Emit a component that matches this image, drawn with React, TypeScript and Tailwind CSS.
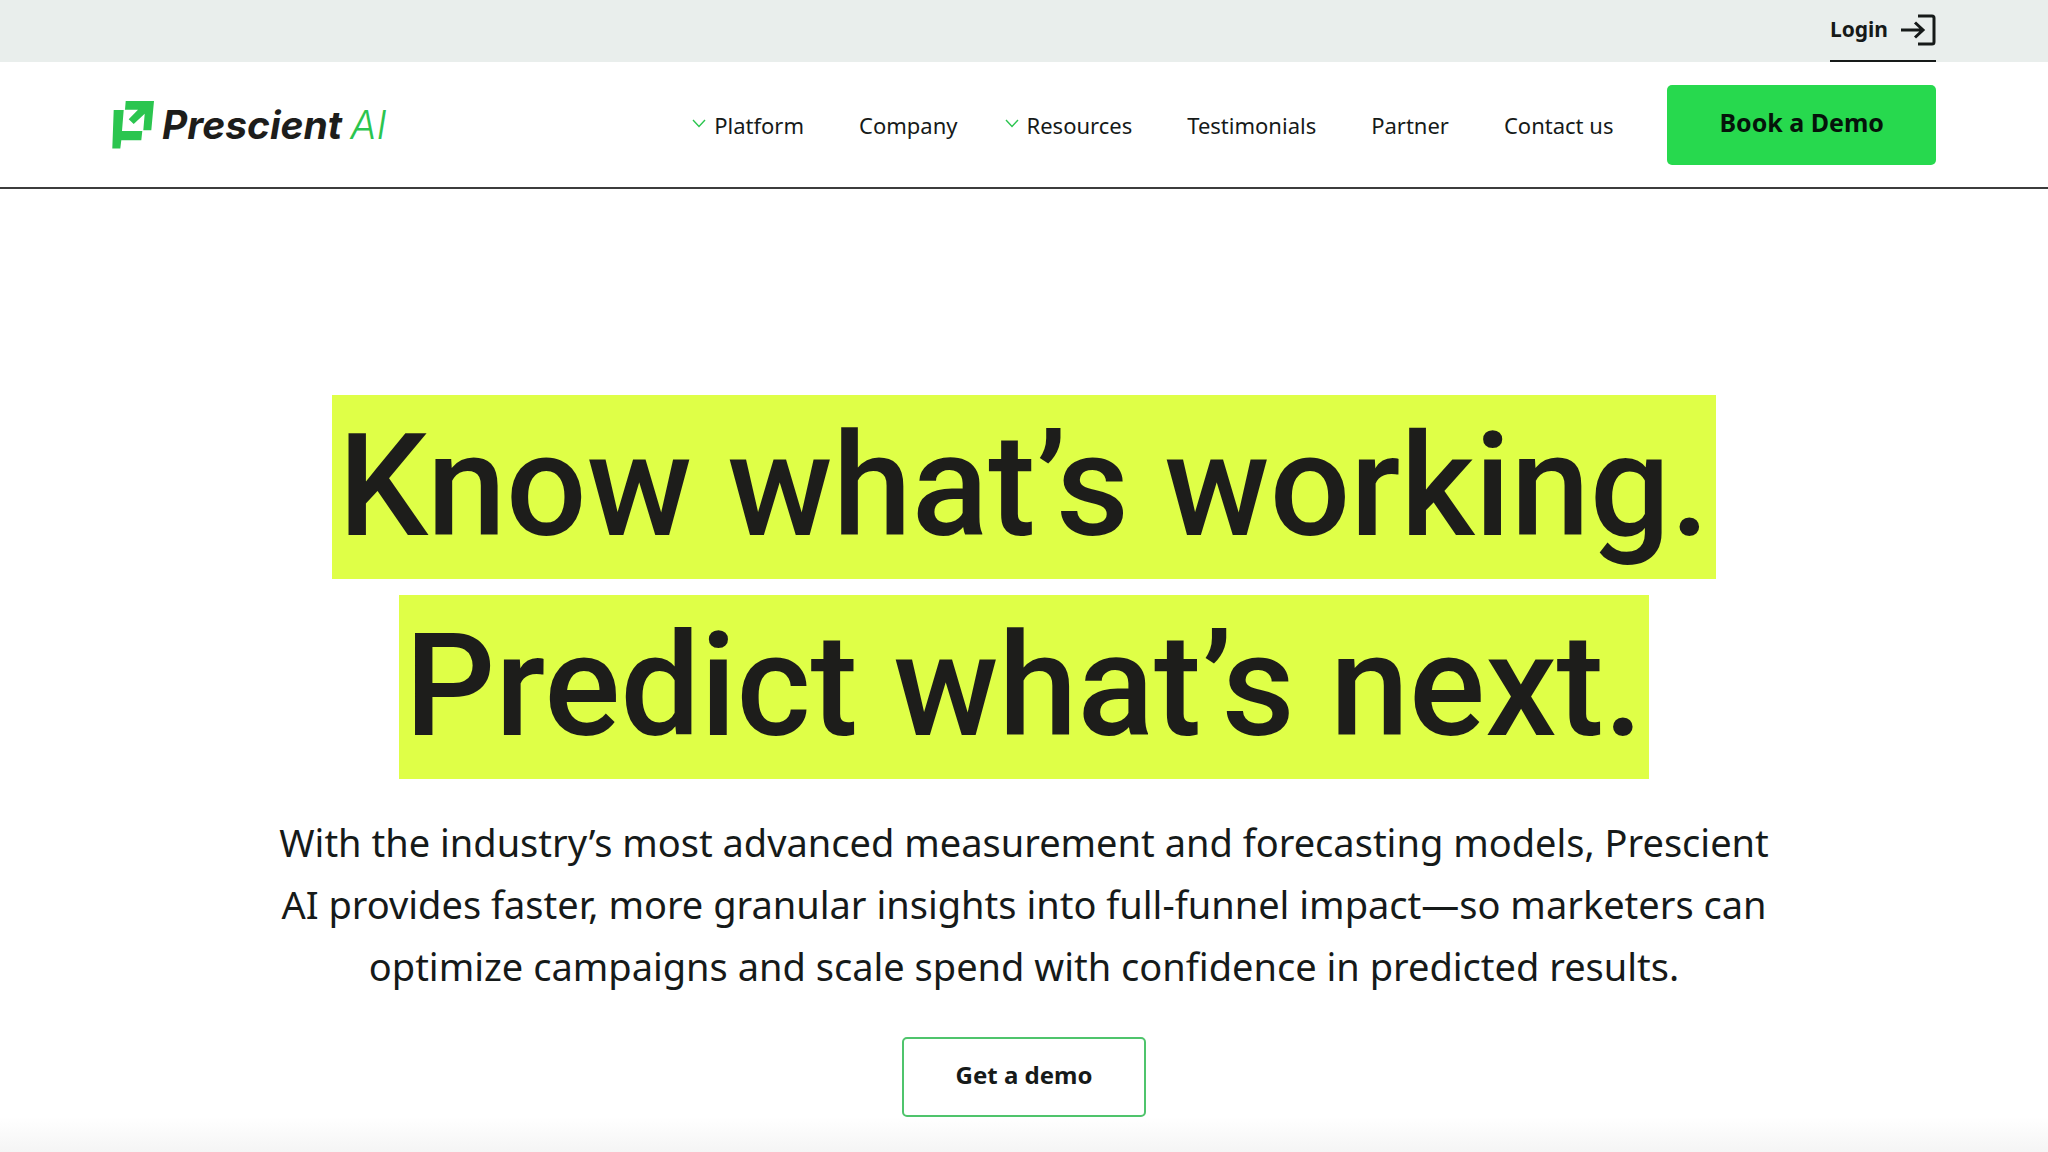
const navItems = [
  { label: 'Platform', dropdown: true },
  { label: 'Company', dropdown: false },
  { label: 'Resources', dropdown: true },
  { label: 'Testimonials', dropdown: false },
  { label: 'Partner', dropdown: false },
  { label: 'Contact us', dropdown: false },
];

function Logo() {
  return (
    <a href="#" aria-label="Prescient AI" className="flex items-center gap-2">
      <svg width="42" height="48" viewBox="0 0 42 48" fill="#2bc54f" aria-hidden="true">
        <path d="M13.7 0H42L39.3 29.3H31.3L32.7 12.7L21.7 23L16.7 18.3L26 8.7H13Z" />
        <path d="M1.7 9H11.7L10 30H30.3L29.3 39.3H9.3L8.3 47.5H0.3Z" />
      </svg>
      <span className="flex items-baseline gap-2 font-['Inter',sans-serif] text-[39px] leading-none italic">
        <span className="font-bold text-[#1d1d1b]">Prescient</span>
        <span className="font-light text-[#2bc54f]">AI</span>
      </span>
    </a>
  );
}

export default function App() {
  return (
    <div className="flex min-h-screen flex-col bg-white font-['Noto_Sans',sans-serif] text-[#161a19]">
      {/* Utility bar */}
      <div className="flex h-[62px] justify-end bg-[#e9eeec] px-28">
        <a href="#" className="flex items-center gap-3 border-b-2 border-[#161a19] text-[21px] font-bold">
          Login
          <svg width="36" height="32" viewBox="0 0 36 32" fill="none" stroke="currentColor" strokeWidth="3" aria-hidden="true">
            <path d="M1 16H23M15 8.500L23 16L15 23.500" />
            <path d="M18 2H32Q34 2 34 4V28Q34 30 32 30H18" />
          </svg>
        </a>
      </div>

      {/* Header */}
      <header className="flex h-[127px] items-center justify-between border-b-2 border-[#3c3c3c] px-28">
        <Logo />
        <div className="flex items-center gap-[54px]">
          <nav className="flex gap-[55px] pt-0.5 text-[22px]">
            {navItems.map((item) => (
              <a key={item.label} href="#" className={item.dropdown ? 'relative pl-3.5' : ''}>
                {item.dropdown && (
                  <svg className="absolute top-2.5 -left-2" width="14" height="9" viewBox="0 0 14 9" fill="none" stroke="#2bc54f" strokeWidth="1.4" aria-hidden="true">
                    <path d="M1 1L7 7.500L13 1" />
                  </svg>
                )}
                {item.label}
              </a>
            ))}
          </nav>
          <button className="h-20 rounded-[5px] bg-[#27d94e] px-[52px] pb-1 text-[25px] font-bold text-[#05140a]">
            Book a Demo
          </button>
        </div>
      </header>

      {/* Hero */}
      <main className="flex flex-col items-center pt-[206px] text-center">
        <h1 className="flex flex-col items-center gap-4 font-['Roboto',sans-serif] text-[142px] leading-[184px] font-medium text-[#1d1d1b]">
          <span className="bg-[#dfff47] px-[6px]">Know what’s working.</span>
          <span className="bg-[#dfff47] px-[6px]">Predict what’s next.</span>
        </h1>
        <p className="mt-8 max-w-[1500px] text-[38px] leading-[62px]">
          With the industry’s most advanced measurement and forecasting models, Prescient AI provides faster, more
          granular insights into full-funnel impact—so marketers can optimize campaigns and scale spend with confidence
          in predicted results.
        </p>
        <button className="mt-10 h-20 rounded-[5px] border-2 border-[#4fc46c] px-[52px] pb-1 text-[24px] font-bold">
          Get a demo
        </button>
      </main>
      <div className="flex-1 bg-linear-to-b from-white to-[#f5f5f5]" />
    </div>
  );
}
